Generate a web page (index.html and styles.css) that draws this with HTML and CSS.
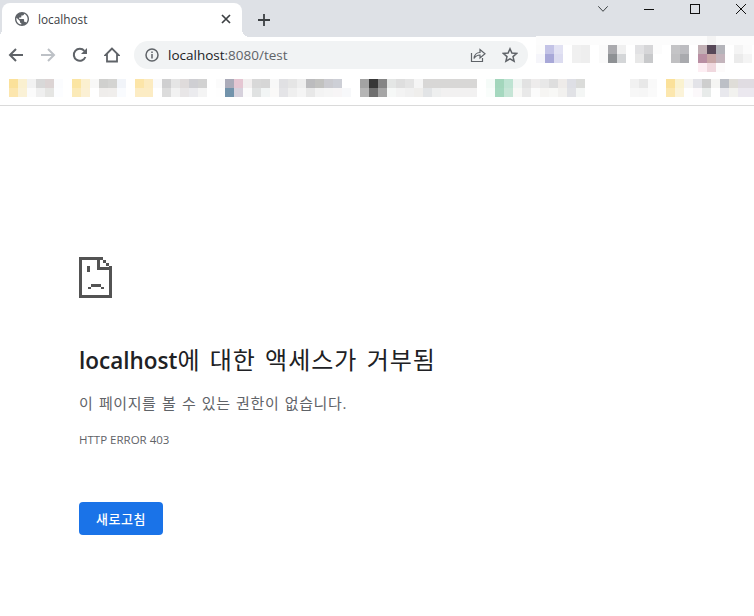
FILE: index.html
```html
<!DOCTYPE html>
<html lang="ko">
<head>
<meta charset="utf-8">
<title>localhost</title>
<link rel="stylesheet" href="styles.css">
</head>
<body>
<header class="tabstrip">
  <div class="tab">
    <svg class="tab-favicon" width="14" height="14" viewBox="2 2 20 20"><path fill="#5f6368" d="M12 2C6.480 2 2 6.480 2 12s4.480 10 10 10 10-4.480 10-10S17.520 2 12 2zm-1 17.930c-3.950-.49-7-3.850-7-7.930 0-.62.08-1.210.21-1.790L9 15v1c0 1.100.9 2 2 2v1.930zm6.900-2.540c-.26-.81-1-1.390-1.900-1.390h-1v-3c0-.55-.45-1-1-1H8v-2h2c.55 0 1-.45 1-1V7h2c1.100 0 2-.9 2-2v-.41c2.930 1.190 5 4.060 5 7.410 0 2.080-.8 3.970-2.100 5.390z"/></svg>
    <span class="tab-title">localhost</span>
    <svg class="tab-close" width="10" height="10" viewBox="0 0 10 10"><path d="M1 1l8 8M9 1L1 9" stroke="#3c4043" stroke-width="1.700"/></svg>
  </div>
  <svg class="new-tab" width="14" height="14" viewBox="0 0 14 14"><path d="M7 1v12M1 7h12" stroke="#3c4043" stroke-width="1.800"/></svg>
  <div class="win-controls">
    <svg width="10" height="6" viewBox="0 0 10 6"><path d="M.3.3L5 5.300 9.700.3" fill="none" stroke="#3c4043" stroke-width="1"/></svg>
    <svg width="10" height="1" viewBox="0 0 10 1"><path d="M0 .5h10" stroke="#111" stroke-width="1"/></svg>
    <svg width="10" height="10" viewBox="0 0 10 10"><rect x=".5" y=".5" width="9" height="9" fill="none" stroke="#111"/></svg>
    <svg width="10" height="10" viewBox="0 0 10 10"><path d="M0 0l10 10M10 0L0 10" stroke="#111" stroke-width="1"/></svg>
  </div>
</header>

<nav class="toolbar">
  <svg class="tool" width="16" height="16" viewBox="0 0 16 16"><path d="M15 8H2M8 2L2 8l6 6" fill="none" stroke="#5f6368" stroke-width="2"/></svg>
  <svg class="tool" width="16" height="16" viewBox="0 0 16 16"><path d="M1 8h13M8 2l6 6-6 6" fill="none" stroke="#bdc1c6" stroke-width="2"/></svg>
  <svg class="tool" width="16" height="16" viewBox="0 0 16 16"><path d="M13.400 10A6 6 0 1 1 12.400 3.900" fill="none" stroke="#5f6368" stroke-width="2"/><path d="M15 1v6H9z" fill="#5f6368"/></svg>
  <svg class="tool" width="16" height="16" viewBox="0 0 16 16"><path d="M8 1.500L1.500 8H3v6.500h10V8h1.500z" fill="none" stroke="#5f6368" stroke-width="1.800"/></svg>
  <div class="omnibox">
    <svg class="info" width="14" height="14" viewBox="0 0 14 14"><circle cx="7" cy="7" r="6" fill="none" stroke="#5f6368" stroke-width="1.500"/><path d="M7 6v4.500M7 3.400v1.600" stroke="#5f6368" stroke-width="1.500"/></svg>
    <span class="url"><span class="url-host">localhost</span>:8080/test</span>
    <svg class="share" width="16" height="16" viewBox="0 0 16 16"><path d="M1.500 6v8.500h11V11" fill="none" stroke="#5f6368" stroke-width="1.200"/><path d="M4 11.500C4.500 7.500 7 5.500 10 5.500V2.500L15 6.800 10 11V8C7.500 8 5.500 9.300 4 11.500z" fill="none" stroke="#5f6368" stroke-width="1.200"/></svg>
    <svg class="star" width="16" height="16" viewBox="0 0 16 16"><path d="M8 1.800l1.900 4.300 4.700.4-3.600 3.100 1.100 4.600L8 11.800l-4.100 2.400L5 9.600 1.400 6.500l4.700-.4z" fill="none" stroke="#5f6368" stroke-width="1.500"/></svg>
  </div>
  <svg class="extensions" width="218" height="36" viewBox="536 36 218 36" shape-rendering="crispEdges">
    <rect x="536" y="36" width="218" height="9" fill="#fcfcfc"/><rect x="707" y="36" width="9" height="9" fill="#f4f4f4"/>
    <rect x="536" y="45" width="9" height="9" fill="#fbfbfb"/><rect x="545" y="45" width="9" height="9" fill="#c3c3e6"/><rect x="554" y="45" width="9" height="9" fill="#e2e2f3"/><rect x="572" y="45" width="9" height="9" fill="#f0f0f0"/><rect x="581" y="45" width="9" height="9" fill="#eee"/><rect x="599" y="45" width="9" height="9" fill="#fafafa"/><rect x="608" y="45" width="9" height="9" fill="#aaaaae"/><rect x="617" y="45" width="9" height="9" fill="#f0f0f0"/><rect x="635" y="45" width="9" height="9" fill="#e2e2e4"/><rect x="644" y="45" width="9" height="9" fill="#d6d6d8"/><rect x="653" y="45" width="9" height="9" fill="#fcfcfc"/><rect x="671" y="45" width="9" height="9" fill="#c4c4c6"/><rect x="680" y="45" width="9" height="9" fill="#bcbcc0"/><rect x="698" y="45" width="9" height="9" fill="#c2b0b5"/><rect x="707" y="45" width="9" height="9" fill="#574858"/><rect x="716" y="45" width="9" height="9" fill="#b4b4ba"/><rect x="734" y="45" width="9" height="9" fill="#f4f4f4"/><rect x="743" y="45" width="9" height="9" fill="#fbfbfb"/>
    <rect x="536" y="54" width="9" height="9" fill="#f5f5fa"/><rect x="545" y="54" width="9" height="9" fill="#a8a8d8"/><rect x="554" y="54" width="9" height="9" fill="#dcdcf0"/><rect x="572" y="54" width="9" height="9" fill="#f0f0f0"/><rect x="581" y="54" width="9" height="9" fill="#eee"/><rect x="599" y="54" width="9" height="9" fill="#fafafa"/><rect x="608" y="54" width="9" height="9" fill="#8e9194"/><rect x="617" y="54" width="9" height="9" fill="#d4d6d8"/><rect x="635" y="54" width="9" height="9" fill="#e8e8e8"/><rect x="644" y="54" width="9" height="9" fill="#c8c9cb"/><rect x="671" y="54" width="9" height="9" fill="#c0c0c2"/><rect x="680" y="54" width="9" height="9" fill="#a9aaae"/><rect x="698" y="54" width="9" height="9" fill="#b98fa3"/><rect x="707" y="54" width="9" height="9" fill="#c8a6a6"/><rect x="716" y="54" width="9" height="9" fill="#c4b4bc"/><rect x="734" y="54" width="9" height="9" fill="#ebebeb"/><rect x="743" y="54" width="9" height="9" fill="#f4f4f4"/>
    <rect x="698" y="63" width="9" height="9" fill="#fdeef3"/><rect x="707" y="63" width="9" height="9" fill="#f0d8de"/><rect x="716" y="63" width="9" height="9" fill="#fdfbfb"/>
  </svg>
</nav>

<div class="bookmarks">
  <svg width="754" height="18" viewBox="0 79 754 18" shape-rendering="crispEdges">
    <rect x="9" y="79" width="9" height="9" fill="#fbe19a"/><rect x="18" y="79" width="9" height="9" fill="#faf0d0"/><rect x="27" y="79" width="9" height="9" fill="#f2f2f2"/><rect x="36" y="79" width="9" height="9" fill="#d8d8d8"/><rect x="45" y="79" width="9" height="9" fill="#dcd4d4"/><rect x="54" y="79" width="9" height="9" fill="#fbfcfe"/>
    <rect x="9" y="88" width="9" height="9" fill="#fce6ae"/><rect x="18" y="88" width="9" height="9" fill="#faf1d6"/><rect x="27" y="88" width="9" height="9" fill="#fbfbfb"/><rect x="36" y="88" width="9" height="9" fill="#efefef"/><rect x="45" y="88" width="9" height="9" fill="#e5e5e3"/><rect x="54" y="88" width="9" height="9" fill="#fcfdff"/>
    <rect x="72" y="79" width="9" height="9" fill="#fbe5a3"/><rect x="81" y="79" width="9" height="9" fill="#fbf0d0"/><rect x="90" y="79" width="9" height="9" fill="#f8f8f7"/><rect x="99" y="79" width="9" height="9" fill="#d0d0ce"/><rect x="108" y="79" width="9" height="9" fill="#d4d4d2"/><rect x="117" y="79" width="9" height="9" fill="#f1f4f9"/>
    <rect x="72" y="88" width="9" height="9" fill="#fbeab8"/><rect x="81" y="88" width="9" height="9" fill="#fbf0d4"/><rect x="99" y="88" width="9" height="9" fill="#efedeb"/><rect x="108" y="88" width="9" height="9" fill="#f0eeec"/><rect x="117" y="88" width="9" height="9" fill="#f9fbfe"/>
    <rect x="135" y="79" width="9" height="9" fill="#fce5a8"/><rect x="144" y="79" width="9" height="9" fill="#fcebc0"/><rect x="153" y="79" width="9" height="9" fill="#fafafa"/><rect x="162" y="79" width="9" height="9" fill="#cfcfd0"/><rect x="171" y="79" width="9" height="9" fill="#e5e5e5"/><rect x="180" y="79" width="9" height="9" fill="#dfdbdb"/><rect x="189" y="79" width="9" height="9" fill="#cfcfd3"/><rect x="198" y="79" width="9" height="9" fill="#d2d2d2"/>
    <rect x="135" y="88" width="9" height="9" fill="#fcecc4"/><rect x="144" y="88" width="9" height="9" fill="#fcecc4"/><rect x="162" y="88" width="9" height="9" fill="#dcdcdc"/><rect x="171" y="88" width="9" height="9" fill="#f2f2f2"/><rect x="180" y="88" width="9" height="9" fill="#e8e6e7"/><rect x="189" y="88" width="9" height="9" fill="#ebebee"/><rect x="198" y="88" width="9" height="9" fill="#f4f4f4"/>
    <rect x="216" y="79" width="9" height="9" fill="#fbfbfb"/><rect x="225" y="79" width="9" height="9" fill="#ababb9"/><rect x="234" y="79" width="9" height="9" fill="#e5c6d2"/><rect x="243" y="79" width="9" height="9" fill="#f2efef"/><rect x="252" y="79" width="9" height="9" fill="#d8d8d8"/><rect x="261" y="79" width="9" height="9" fill="#d6d6d6"/><rect x="270" y="79" width="9" height="9" fill="#f8f8f8"/><rect x="279" y="79" width="9" height="9" fill="#e0e0e3"/><rect x="288" y="79" width="9" height="9" fill="#e5e5e5"/><rect x="297" y="79" width="9" height="9" fill="#eee"/>
    <rect x="216" y="88" width="9" height="9" fill="#fefefe"/><rect x="225" y="88" width="9" height="9" fill="#7293ab"/><rect x="234" y="88" width="9" height="9" fill="#d6d1dc"/><rect x="243" y="88" width="9" height="9" fill="#fbfbfb"/><rect x="252" y="88" width="9" height="9" fill="#e0e2e2"/><rect x="261" y="88" width="9" height="9" fill="#f2f5f5"/><rect x="270" y="88" width="9" height="9" fill="#faf9f8"/><rect x="279" y="88" width="9" height="9" fill="#e4e4e7"/><rect x="288" y="88" width="9" height="9" fill="#efefef"/><rect x="297" y="88" width="9" height="9" fill="#f5f5f5"/>
    <rect x="306" y="79" width="9" height="9" fill="#bcbcbe"/><rect x="315" y="79" width="9" height="9" fill="#c2c2c0"/><rect x="324" y="79" width="9" height="9" fill="#cbcbd0"/><rect x="333" y="79" width="9" height="9" fill="#cdcfd6"/>
    <rect x="306" y="88" width="9" height="9" fill="#e8e8e8"/><rect x="315" y="88" width="9" height="9" fill="#f3f3f3"/><rect x="324" y="88" width="9" height="9" fill="#f5f5f5"/><rect x="333" y="88" width="9" height="9" fill="#f7f5f6"/><rect x="342" y="88" width="9" height="9" fill="#f7f8fa"/>
    <rect x="360" y="79" width="9" height="9" fill="#a3a3a3"/><rect x="369" y="79" width="9" height="9" fill="#373737"/><rect x="378" y="79" width="9" height="9" fill="#858585"/><rect x="387" y="79" width="9" height="9" fill="#e4e6e5"/><rect x="396" y="79" width="9" height="9" fill="#dedede"/><rect x="405" y="79" width="9" height="9" fill="#e4e4e4"/><rect x="414" y="79" width="9" height="9" fill="#f5f5f5"/><rect x="423" y="79" width="54" height="9" fill="#d8d7d6"/>
    <rect x="360" y="88" width="9" height="9" fill="#b5b5b5"/><rect x="369" y="88" width="9" height="9" fill="#6f6f6f"/><rect x="378" y="88" width="9" height="9" fill="#a5a5a5"/><rect x="387" y="88" width="9" height="9" fill="#f6f8f7"/><rect x="396" y="88" width="9" height="9" fill="#f3f3f3"/><rect x="405" y="88" width="9" height="9" fill="#f0f0f0"/><rect x="414" y="88" width="9" height="9" fill="#efeeec"/><rect x="423" y="88" width="9" height="9" fill="#e2e4e6"/><rect x="432" y="88" width="9" height="9" fill="#eeefef"/><rect x="441" y="88" width="36" height="9" fill="#f2f1f1"/>
    <rect x="486" y="79" width="9" height="9" fill="#f5fbf8"/><rect x="495" y="79" width="9" height="9" fill="#a3d6bc"/><rect x="504" y="79" width="9" height="9" fill="#bee3d2"/><rect x="513" y="79" width="9" height="9" fill="#f0f4f2"/><rect x="522" y="79" width="9" height="9" fill="#e2e2e2"/><rect x="531" y="79" width="9" height="9" fill="#eeecec"/><rect x="540" y="79" width="9" height="9" fill="#e8e8e8"/><rect x="549" y="79" width="9" height="9" fill="#dedede"/><rect x="558" y="79" width="9" height="9" fill="#eeebe9"/><rect x="567" y="79" width="9" height="9" fill="#dedfe5"/><rect x="576" y="79" width="9" height="9" fill="#dbdcda"/>
    <rect x="486" y="88" width="9" height="9" fill="#f9fdfb"/><rect x="495" y="88" width="9" height="9" fill="#a5d8bf"/><rect x="504" y="88" width="9" height="9" fill="#c6e5d6"/><rect x="513" y="88" width="9" height="9" fill="#f8f8f6"/><rect x="522" y="88" width="9" height="9" fill="#e9e9e9"/><rect x="531" y="88" width="9" height="9" fill="#fbfbfb"/><rect x="540" y="88" width="9" height="9" fill="#f6f5f3"/><rect x="549" y="88" width="9" height="9" fill="#f8f8f6"/><rect x="558" y="88" width="9" height="9" fill="#f2f1ef"/><rect x="567" y="88" width="9" height="9" fill="#e1e2e6"/><rect x="576" y="88" width="9" height="9" fill="#f4f6f5"/>
    <rect x="630" y="79" width="9" height="9" fill="#f1f1f1"/><rect x="639" y="79" width="9" height="9" fill="#e8e8e8"/><rect x="648" y="79" width="9" height="9" fill="#f9f9f9"/>
    <rect x="630" y="88" width="9" height="9" fill="#f7f7f7"/><rect x="639" y="88" width="9" height="9" fill="#f6f6f6"/><rect x="648" y="88" width="9" height="9" fill="#fafafa"/>
    <rect x="666" y="79" width="9" height="9" fill="#fbe19a"/><rect x="675" y="79" width="9" height="9" fill="#faf2d0"/><rect x="684" y="79" width="9" height="9" fill="#f6f5f3"/><rect x="693" y="79" width="9" height="9" fill="#e3e3e8"/><rect x="702" y="79" width="9" height="9" fill="#cecece"/><rect x="711" y="79" width="9" height="9" fill="#f5f5f3"/><rect x="720" y="79" width="9" height="9" fill="#bcbfc6"/><rect x="729" y="79" width="9" height="9" fill="#dfddd8"/><rect x="738" y="79" width="16" height="9" fill="#e0dce2"/>
    <rect x="666" y="88" width="9" height="9" fill="#fce7ae"/><rect x="675" y="88" width="9" height="9" fill="#fbf3d9"/><rect x="684" y="88" width="9" height="9" fill="#fefefe"/><rect x="693" y="88" width="9" height="9" fill="#fbf8fa"/><rect x="702" y="88" width="9" height="9" fill="#e8ebea"/><rect x="720" y="88" width="9" height="9" fill="#e8e8ed"/><rect x="729" y="88" width="9" height="9" fill="#f2f2ef"/><rect x="738" y="88" width="16" height="9" fill="#ebe8ef"/>
  </svg>
</div>

<main class="error-page">
  <svg class="sad-icon" width="33" height="41" viewBox="0 0 33 41" shape-rendering="crispEdges" fill="#535353">
    <path d="M0 0H24V3H27V6H30V9H33V41H0ZM3 3V38H30V13H18V3ZM21 3V10H30V9H27V6H24V3Z" fill-rule="evenodd"/>
    <path d="M8 9H11V15H8Z"/>
    <path d="M12 27H22V30H25V32H22V30H12V32H9V30H12Z"/>
  </svg>
  <h1 class="title"><span class="title-host">localhost</span>에 대한 액세스가 거부됨</h1>
  <p class="message">이 페이지를 볼 수 있는 권한이 없습니다.</p>
  <p class="code">HTTP ERROR 403</p>
  <button class="reload">새로고침</button>
</main>
</body>
</html>
```

FILE: styles.css
```css
* { box-sizing: border-box; }
html, body { margin: 0; padding: 0; }
body {
  width: 754px;
  height: 616px;
  overflow: hidden;
  background: #fff;
  font-family: "Open Sans", "Noto Sans CJK KR", sans-serif;
}
.tabstrip {
  display: flex;
  align-items: flex-start;
  height: 37px;
  padding: 3px 0 0 2px;
  background: #dee1e6;
}
.tab {
  position: relative;
  display: flex;
  align-items: center;
  width: 240px;
  height: 34px;
  padding: 0 13px 2px;
  background: #fff;
  border-radius: 8px 8px 0 0;
}
.tab::before,
.tab::after {
  content: "";
  position: absolute;
  bottom: 0;
  width: 8px;
  height: 8px;
}
.tab::before {
  left: -8px;
  background: radial-gradient(circle at 0 0, transparent 8px, #fff 8px);
}
.tab::after {
  right: -8px;
  background: radial-gradient(circle at 100% 0, transparent 8px, #fff 8px);
}
.tab-favicon { flex: none; }
.tab-title {
  flex: 1;
  margin-left: 9px;
  font-size: 11.8px;
  color: #3c4043;
}
.tab-close { flex: none; margin-right: -2px; }
.new-tab { flex: none; margin: 10px 0 0 15px; }
.win-controls {
  display: flex;
  align-items: center;
  gap: 36px;
  height: 12px;
  margin-left: auto;
  padding-right: 8px;
}
.win-controls svg { flex: none; }
.toolbar {
  display: flex;
  align-items: center;
  height: 35px;
  padding-left: 8px;
}
.tool { flex: none; margin-right: 16px; }
.omnibox {
  flex: none;
  display: flex;
  align-items: center;
  width: 394px;
  height: 28px;
  margin-left: -2px;
  padding: 0 10px 0 11px;
  border-radius: 14px;
  background: #f1f3f4;
}
.info { flex: none; }
.url {
  flex: 1;
  margin-left: 9px;
  font-size: 13.5px;
  color: #5f6368;
}
.url-host { color: #202124; }
.share { flex: none; margin-right: 16px; }
.star { flex: none; }
.extensions {
  flex: none;
  align-self: flex-start;
  margin: -1px 0 0 8px;
}
.bookmarks {
  height: 34px;
  padding-top: 7px;
  border-bottom: 1px solid #dadada;
}
.bookmarks svg { display: block; }
.error-page {
  padding: 151px 0 0 79px;
}
.sad-icon { display: block; }
.title {
  margin: 47px 0 0;
  font-size: 24px;
  font-weight: 400;
  line-height: 30px;
  letter-spacing: 1px;
  word-spacing: 2px;
  color: #202124;
}
.title-host { font-size: 22.5px; font-weight: 600; letter-spacing: 0; }
.message {
  margin: 17px 0 0;
  font-size: 15px;
  line-height: 21px;
  letter-spacing: .6px;
  word-spacing: 1px;
  color: #5f6368;
}
.code {
  margin: 18px 0 0;
  font-size: 11.5px;
  line-height: 16px;
  color: #5f6368;
}
.reload {
  display: block;
  width: 84px;
  height: 33px;
  margin-top: 54px;
  padding: 0;
  border: 0;
  border-radius: 4px;
  background: #1a73e8;
  color: #fff;
  font-family: inherit;
  font-size: 13px;
  font-weight: 500;
  letter-spacing: .5px;
}
```
